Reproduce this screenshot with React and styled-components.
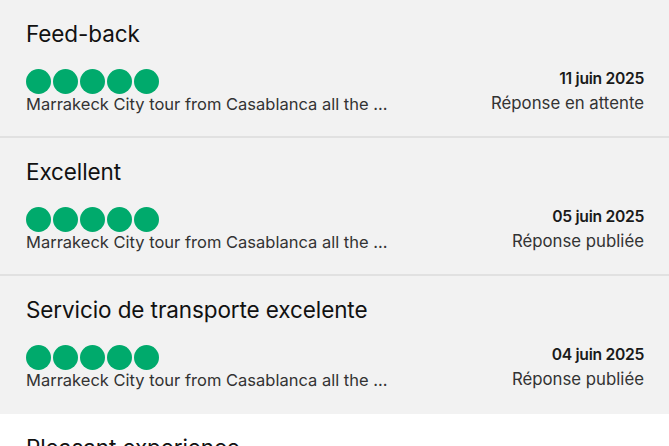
import React from "react";
import styled, { createGlobalStyle } from "styled-components";

const GlobalStyle = createGlobalStyle`
  html, body {
    margin: 0;
    padding: 0;
    background: #ffffff;
  }
  body {
    font-family: Inter, "Noto Sans", sans-serif;
    color: #1a1a1a;
    overflow: hidden;
  }
`;

const reviews = [
  {
    title: "Feed-back",
    tour: "Marrakeck City tour from Casablanca all the ...",
    date: "11 juin 2025",
    status: "Réponse en attente",
    shaded: true,
  },
  {
    title: "Excellent",
    tour: "Marrakeck City tour from Casablanca all the ...",
    date: "05 juin 2025",
    status: "Réponse publiée",
    shaded: true,
  },
  {
    title: "Servicio de transporte excelente",
    tour: "Marrakeck City tour from Casablanca all the ...",
    date: "04 juin 2025",
    status: "Réponse publiée",
    shaded: true,
  },
  {
    title: "Pleasant experience",
    tour: "Marrakeck City tour from Casablanca all the ...",
    date: "02 juin 2025",
    status: "Réponse publiée",
    shaded: false,
  },
];

export default function App() {
  return (
    <>
      <GlobalStyle />
      <List>
        {reviews.map((r, i) => {
          const next = reviews[i + 1];
          return (
            <Card
              key={i}
              $shaded={r.shaded}
              $divider={r.shaded && next && next.shaded}
            >
              <Title>{r.title}</Title>
              <Row>
                <Left>
                  <Bubbles>
                    {[0, 1, 2, 3, 4].map((b) => (
                      <Bubble key={b} />
                    ))}
                  </Bubbles>
                  <Tour>{r.tour}</Tour>
                </Left>
                <Right>
                  <DateText>{r.date}</DateText>
                  <Status>{r.status}</Status>
                </Right>
              </Row>
            </Card>
          );
        })}
      </List>
    </>
  );
}

const List = styled.div`
  display: flex;
  flex-direction: column;
  width: 669px;
`;

const Card = styled.div`
  box-sizing: border-box;
  height: 138px;
  padding: 19px 25px 0 26px;
  background: ${(p) => (p.$shaded ? "#f2f2f2" : "#ffffff")};
  border-bottom: 2px solid
    ${(p) => (p.$divider ? "#e1e1e1" : p.$shaded ? "#f2f2f2" : "#ffffff")};
  display: flex;
  flex-direction: column;
`;

const Title = styled.div`
  font-size: 22.5px;
  line-height: 30px;
  font-weight: 400;
  color: #111;
  letter-spacing: -0.1px;
`;

const Row = styled.div`
  margin-top: 19px;
  display: flex;
  justify-content: space-between;
  align-items: flex-start;
`;

const Left = styled.div`
  display: flex;
  flex-direction: column;
`;

const Bubbles = styled.div`
  display: flex;
  gap: 2px;
  height: 26px;
  align-items: center;
`;

const Bubble = styled.span`
  display: block;
  width: 25px;
  height: 25px;
  border-radius: 50%;
  background: #00aa6c;
`;

const Tour = styled.div`
  font-size: 16.5px;
  line-height: 22px;
  color: #333;
  margin-top: -1px;
`;

const Right = styled.div`
  display: flex;
  flex-direction: column;
  align-items: flex-end;
`;

const DateText = styled.div`
  font-size: 15.7px;
  line-height: 20px;
  font-weight: 600;
  color: #1a1a1a;
  letter-spacing: -0.3px;
  margin-top: 1px;
`;

const Status = styled.div`
  font-size: 16.8px;
  line-height: 22px;
  color: #333;
  margin-top: 3px;
`;
